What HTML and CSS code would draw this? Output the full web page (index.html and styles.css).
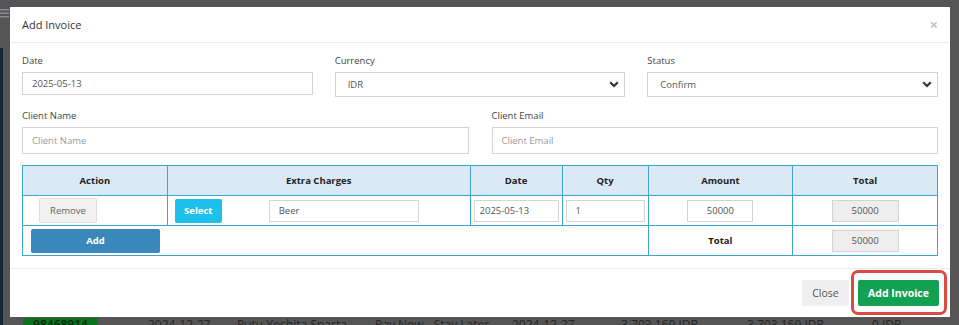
FILE: index.html
```html
<!DOCTYPE html>
<html lang="en">

<head>
    <meta charset="UTF-8">
    <meta name="viewport" content="width=device-width, initial-scale=1.0">
    <title>Add Invoice</title>
    <link rel="stylesheet" href="styles.css">
</head>

<body>
    <!-- page behind the modal (dimmed) -->
    <div class="page">
        <div class="topbar">
            <svg class="burger" width="9" height="9" viewBox="0 0 9 9">
                <rect x="0" y="0" width="9" height="1.4" fill="#8a8f96"/>
                <rect x="0" y="3.5" width="9" height="1.4" fill="#8a8f96"/>
                <rect x="0" y="7" width="9" height="1.4" fill="#8a8f96"/>
            </svg>
        </div>
        <div class="main">
            <div class="sidebar"></div>
            <div class="content">
                <div class="list-row">
                    <span class="cell code">98468914</span>
                    <span class="cell">2024-12-27</span>
                    <span class="cell">Putu Yoshita Sparta</span>
                    <span class="cell">Pay Now - Stay Later</span>
                    <span class="cell">2024-12-27</span>
                    <span class="cell">3.703.169 IDR</span>
                    <span class="cell">3.703.169 IDR</span>
                    <span class="cell">0 IDR</span>
                </div>
            </div>
        </div>
    </div>

    <div class="modal">
        <div class="modal-header">
            <h5 class="modal-title">Add Invoice</h5>
            <span class="modal-x">&times;</span>
        </div>
        <div class="modal-body">
            <div class="form-row three">
                <div class="field">
                    <label>Date</label>
                    <input class="form-control" type="text" value="2025-05-13">
                </div>
                <div class="field">
                    <label>Currency</label>
                    <div class="select">
                        <span>IDR</span>
                        <svg class="chev" width="10" height="7" viewBox="0 0 10 7"><path d="M1.2 1.2 L5 5 L8.8 1.2" fill="none" stroke="#333" stroke-width="2.2"/></svg>
                    </div>
                </div>
                <div class="field">
                    <label>Status</label>
                    <div class="select">
                        <span>Confirm</span>
                        <svg class="chev" width="10" height="7" viewBox="0 0 10 7"><path d="M1.2 1.2 L5 5 L8.8 1.2" fill="none" stroke="#333" stroke-width="2.2"/></svg>
                    </div>
                </div>
            </div>
            <div class="form-row two">
                <div class="field">
                    <label>Client Name</label>
                    <input class="form-control tall" type="text" placeholder="Client Name">
                </div>
                <div class="field">
                    <label>Client Email</label>
                    <input class="form-control tall" type="text" placeholder="Client Email">
                </div>
            </div>

            <table class="charges">
                <thead>
                    <tr>
                        <th class="c-action">Action</th>
                        <th class="c-extra">Extra Charges</th>
                        <th class="c-date">Date</th>
                        <th class="c-qty">Qty</th>
                        <th class="c-amount">Amount</th>
                        <th class="c-total">Total</th>
                    </tr>
                </thead>
                <tbody>
                    <tr>
                        <td><button class="btn-remove">Remove</button></td>
                        <td>
                            <div class="extra">
                                <button class="btn-select">Select</button>
                                <input class="cell-input beer" type="text" value="Beer">
                            </div>
                        </td>
                        <td><input class="cell-input date" type="text" value="2025-05-13"></td>
                        <td><input class="cell-input qty" type="text" value="1"></td>
                        <td class="center"><input class="cell-input amount" type="text" value="50000"></td>
                        <td class="center"><input class="cell-input total" type="text" value="50000" readonly></td>
                    </tr>
                    <tr>
                        <td colspan="4"><button class="btn-add">Add</button></td>
                        <td class="center"><b class="total-label">Total</b></td>
                        <td class="center"><input class="cell-input total" type="text" value="50000" readonly></td>
                    </tr>
                </tbody>
            </table>
        </div>
        <div class="modal-footer">
            <button class="btn-close">Close</button>
            <button class="btn-invoice">Add Invoice</button>
        </div>
    </div>
</body>

</html>
```

FILE: styles.css
```css
* {
    margin: 0;
    padding: 0;
    box-sizing: border-box;
}

body {
    height: 325px;
    overflow: hidden;
    background: #555;
    font-family: "Open Sans", "Noto Sans", sans-serif;
    color: #444;
}

/* ---------- page behind ---------- */

.page {
    height: 325px;
    display: flex;
    flex-direction: column;
}

.topbar {
    flex-shrink: 0;
    height: 48px;
    padding-top: 9px;
}

.burger {
    display: block;
}

.main {
    flex: 1;
    display: flex;
}

.sidebar {
    width: 3px;
    background: #14263a;
}

.content {
    flex: 1;
    padding-top: 270px;
}

.list-row {
    display: grid;
    grid-template-columns: 125px 89px 138px 137px 109px 126px 125px 60px;
    padding-left: 20px;
    font-size: 12px;
    line-height: 12px;
    color: #262626;
}

.list-row .cell {
    padding-top: 1px;
}

.list-row .code {
    width: 75px;
    height: 20px;
    background: #0b741c;
    text-align: center;
    font-weight: 600;
    color: #0a2a10;
}

/* ---------- modal ---------- */

.modal {
    position: absolute;
    left: 10px;
    top: 7px;
    width: 940px;
    height: 310px;
    background: #fff;
    display: flex;
    flex-direction: column;
}

.modal-header {
    height: 38px;
    display: flex;
    align-items: center;
    justify-content: space-between;
    padding: 0 12px;
    border-bottom: 1px solid #e9ecef;
}

.modal-title {
    font-size: 11px;
    font-weight: 400;
    color: #333;
}

.modal-x {
    font-size: 15px;
    font-weight: 700;
    color: #c4c4c4;
    line-height: 1;
}

.modal-body {
    padding: 11px 12px 12px;
}

.form-row {
    display: grid;
    margin-bottom: 12px;
}

.form-row.three {
    grid-template-columns: repeat(3, 1fr);
    column-gap: 22px;
}

.form-row.two {
    grid-template-columns: 1fr 1fr;
    column-gap: 23px;
    margin-bottom: 11px;
}

.field label {
    display: block;
    font-size: 9.5px;
    line-height: 13px;
    color: #444;
    margin-bottom: 5px;
}

.form-control {
    display: block;
    width: 100%;
    height: 23px;
    border: 1px solid #d4d4d4;
    padding: 0 9px;
    font-family: inherit;
    font-size: 9.5px;
    color: #555;
    outline: none;
}

.form-control.tall {
    height: 27px;
}

.form-control::placeholder {
    color: #999;
}

.select {
    height: 25px;
    border: 1px solid #d4d4d4;
    display: flex;
    align-items: center;
    justify-content: space-between;
    padding: 0 5px 0 12px;
    font-size: 9.5px;
    color: #555;
}

/* ---------- charges table ---------- */

.charges {
    width: 100%;
    border-collapse: collapse;
    font-size: 9.5px;
}

.charges th,
.charges td {
    border: 1px solid #3ea6cb;
    height: 30px;
    padding: 0 3px;
}

.charges th {
    background: #dbe9f6;
    font-weight: 700;
    color: #222;
}

.c-action { width: 145px; }
.c-extra { width: 303px; }
.c-date { width: 92px; }
.c-qty { width: 86px; }
.c-amount { width: 145px; }
.c-total { width: 145px; }

.charges td.center {
    text-align: center;
}

.total-label {
    color: #222;
}

.extra {
    display: flex;
    align-items: center;
    padding-left: 4px;
}

.cell-input {
    height: 22px;
    border: 1px solid #d4d4d4;
    padding: 0 5px;
    font-family: inherit;
    font-size: 9.5px;
    color: #555;
    outline: none;
}

.cell-input.beer {
    width: 150px;
    margin-left: 47px;
    padding-left: 9px;
}

.cell-input.date {
    width: 85px;
    display: block;
}

.cell-input.qty {
    width: 79px;
    display: block;
    padding-left: 9px;
}

.cell-input.amount {
    width: 66px;
    text-align: center;
}

.cell-input.total {
    width: 67px;
    background: #eee;
    text-align: center;
}

.btn-remove {
    display: block;
    margin-left: 13px;
    width: 58px;
    height: 25px;
    background: #f1f1f1;
    border: 1px solid #ddd;
    border-radius: 2px;
    font-family: inherit;
    font-size: 9.5px;
    color: #666;
}

.btn-select {
    width: 47px;
    height: 24px;
    background: #1cc0ea;
    border: none;
    border-radius: 2px;
    font-family: inherit;
    font-size: 9.5px;
    font-weight: 700;
    color: #fff;
}

.btn-add {
    display: block;
    margin-left: 5px;
    width: 129px;
    height: 24px;
    background: #3a88bb;
    border: none;
    border-radius: 2px;
    font-family: inherit;
    font-size: 9.5px;
    font-weight: 700;
    color: #fff;
}

/* ---------- footer ---------- */

.modal-footer {
    margin-top: auto;
    height: 51px;
    border-top: 1px solid #e9ecef;
    display: flex;
    align-items: center;
    justify-content: flex-end;
    padding: 0 11px 0 0;
    gap: 9px;
}

.btn-close {
    width: 47px;
    height: 26px;
    background: #efefef;
    border: none;
    border-radius: 2px;
    font-family: inherit;
    font-size: 10.5px;
    color: #555;
}

.btn-invoice {
    position: relative;
    width: 81px;
    height: 26px;
    background: #12a152;
    border: none;
    border-radius: 2px;
    font-family: inherit;
    font-size: 10.5px;
    font-weight: 700;
    color: #fff;
}

/* red highlight box drawn over the button */
.btn-invoice::after {
    content: "";
    position: absolute;
    top: -10px;
    right: -8px;
    bottom: -9px;
    left: -7px;
    border: 3px solid #dc4a42;
    border-radius: 7px;
}
```
